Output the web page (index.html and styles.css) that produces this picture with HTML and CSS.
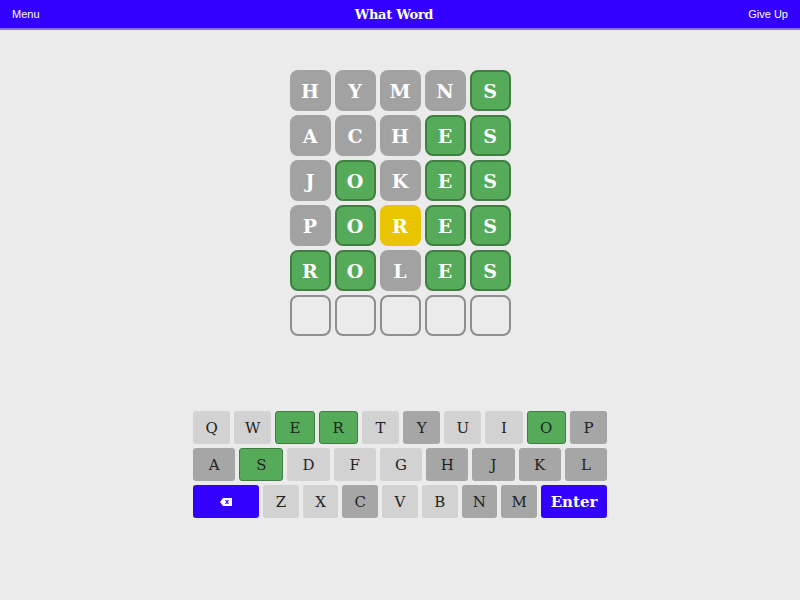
FILE: index.html
```html
<!DOCTYPE html>
<html lang="en">
<head>
  <meta charset="UTF-8" />
  <title>What Word</title>
  <link rel="stylesheet" href="styles.css">
</head>
<body>

<header class="topbar">
  <a class="top-link">Menu</a>
  <h1 class="title">What Word</h1>
  <a class="top-link">Give Up</a>
</header>

<main class="game">
  <div class="board">
    <div class="tile gray">H</div><div class="tile gray">Y</div><div class="tile gray">M</div><div class="tile gray">N</div><div class="tile green">S</div>
    <div class="tile gray">A</div><div class="tile gray">C</div><div class="tile gray">H</div><div class="tile green">E</div><div class="tile green">S</div>
    <div class="tile gray">J</div><div class="tile green">O</div><div class="tile gray">K</div><div class="tile green">E</div><div class="tile green">S</div>
    <div class="tile gray">P</div><div class="tile green">O</div><div class="tile yellow">R</div><div class="tile green">E</div><div class="tile green">S</div>
    <div class="tile green">R</div><div class="tile green">O</div><div class="tile gray">L</div><div class="tile green">E</div><div class="tile green">S</div>
    <div class="tile empty"></div><div class="tile empty"></div><div class="tile empty"></div><div class="tile empty"></div><div class="tile empty"></div>
  </div>

  <div class="keyboard">
    <div class="key-row">
      <button class="key">Q</button>
      <button class="key">W</button>
      <button class="key hit">E</button>
      <button class="key hit">R</button>
      <button class="key">T</button>
      <button class="key used">Y</button>
      <button class="key">U</button>
      <button class="key">I</button>
      <button class="key hit">O</button>
      <button class="key used">P</button>
    </div>
    <div class="key-row">
      <button class="key used">A</button>
      <button class="key hit">S</button>
      <button class="key">D</button>
      <button class="key">F</button>
      <button class="key">G</button>
      <button class="key used">H</button>
      <button class="key used">J</button>
      <button class="key used">K</button>
      <button class="key used">L</button>
    </div>
    <div class="key-row">
      <button class="key wide action">
        <svg width="12" height="8" viewBox="0 0 12 8"><path d="M3 0h9v8H3L0 4z" fill="#fff"/><path d="M5.5 2l3 4M8.5 2l-3 4" stroke="#3300ff" stroke-width="1.2"/></svg>
      </button>
      <button class="key">Z</button>
      <button class="key">X</button>
      <button class="key used">C</button>
      <button class="key">V</button>
      <button class="key">B</button>
      <button class="key used">N</button>
      <button class="key used">M</button>
      <button class="key wide action enter">Enter</button>
    </div>
  </div>
</main>

</body>
</html>
```

FILE: styles.css
```css
html, body {
  margin: 0; padding: 0;
  background: #ebebeb;
  font-family: 'DejaVu Serif', 'Liberation Serif', serif;
  color: #222;
  height: 100%;
}

.topbar {
  display: flex;
  align-items: center;
  justify-content: space-between;
  height: 28px;
  padding: 0 12px;
  background: #3300ff;
  border-bottom: 2px solid #8a6ff5;
  color: #fff;
}

.top-link {
  font-family: 'Liberation Sans', Arial, sans-serif;
  font-size: 11px;
  color: #fff;
  cursor: pointer;
}

.title {
  margin: 0;
  font-size: 13px;
  font-weight: 700;
  letter-spacing: -0.3px;
}

.game {
  display: flex;
  flex-direction: column;
  align-items: center;
}

.board {
  display: grid;
  grid-template-columns: repeat(5, 41px);
  grid-auto-rows: 41px;
  gap: 4px;
  margin-top: 40px;
}

.tile {
  box-sizing: border-box;
  display: flex;
  align-items: center;
  justify-content: center;
  border-radius: 8px;
  font-size: 19px;
  font-weight: 700;
  color: #fff;
}

.tile.gray { background: #a2a2a2; }
.tile.green { background: #55ab5a; border: 2px solid #3f7f42; }
.tile.yellow { background: #e9c400; }
.tile.empty { border: 2px solid #8e8e8e; }

.keyboard {
  display: flex;
  flex-direction: column;
  gap: 4px;
  width: 414px;
  margin-top: 75px;
}

.key-row {
  display: flex;
  gap: 4px;
}

.key {
  flex: 1;
  height: 33px;
  padding: 0;
  border: none;
  border-radius: 3px;
  background: #d2d2d2;
  color: #222;
  font-family: 'DejaVu Serif', 'Liberation Serif', serif;
  font-size: 15px;
  display: flex;
  align-items: center;
  justify-content: center;
}

.key.used { background: #a6a6a6; }
.key.hit { background: #55ab5a; border: 1px solid #3f7f42; }

.key.wide { flex: 1.85; }

.key.action {
  background: #3300ff;
  color: #fff;
}

.key.enter {
  font-size: 15px;
  font-weight: 700;
}
```
